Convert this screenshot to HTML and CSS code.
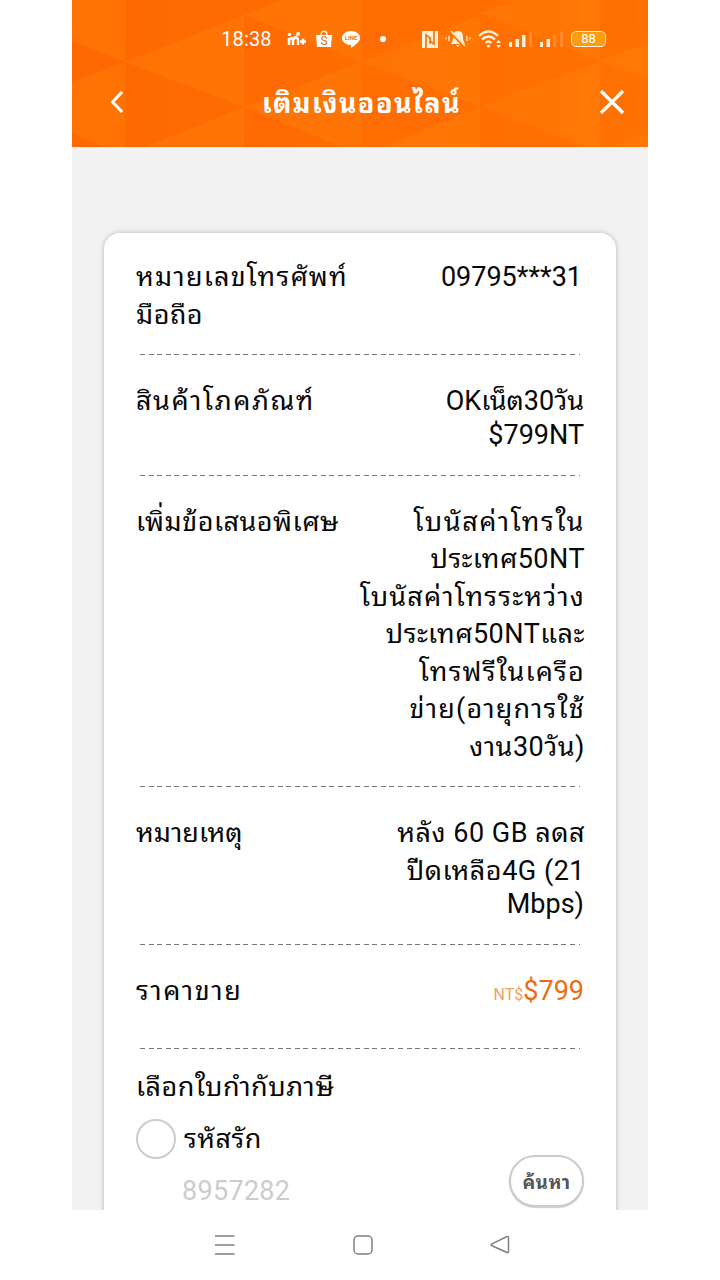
FILE: index.html
```html
<!DOCTYPE html>
<html lang="th">
<head>
    <meta charset="UTF-8">
    <meta name="viewport" content="width=device-width, initial-scale=1.0">
    <title>เติมเงินออนไลน์</title>
    <link rel="stylesheet" href="styles.css">
</head>
<body>
    <div class="phone">
        <header class="header">
            <svg class="pattern" viewBox="0 0 576 147" preserveAspectRatio="none">
                <path d="M-67 15L53 -32V62ZM-67 107L53 62V155ZM53 62L172 15V107ZM53 155L172 107V200ZM172 15L290 -32V62ZM172 107L290 62V155ZM290 62L408 15V107ZM290 155L408 107V200ZM408 13L528 -32V61ZM408 106L528 61V152ZM528 61L648 15V107ZM528 152L648 107V200Z"/>
            </svg>
            <div class="status-bar">
                <span class="time">18:38</span>
                <div class="notifications">
                    <svg width="19" height="16" viewBox="0 0 19 16">
                        <path d="M2 7v7M2 9q3-4 4 0v5M6 9q4-5 5 0v5M13 10.500h6M16 7.500v6" fill="none" stroke="#fff" stroke-width="2.500"/>
                        <circle cx="2.500" cy="3.500" r="1.700" fill="#fff"/>
                        <circle cx="11" cy="3" r="1.900" fill="#fff"/>
                        <path d="M5 7L10 5" stroke="#fff" stroke-width="1.500"/>
                    </svg>
                    <svg width="16" height="18" viewBox="0 0 16 18">
                        <path d="M0 5h16l-1 12H1z" fill="#fff"/>
                        <path d="M5 5c0-5 6-5 6 0" fill="none" stroke="#fff" stroke-width="1.300"/>
                        <text class="bag-letter" x="8" y="15" text-anchor="middle">S</text>
                    </svg>
                    <svg width="18" height="17" viewBox="0 0 18 17">
                        <path d="M9 0c5 0 9 3 9 7 0 3-3 6-9 10v-3c-5 0-9-3-9-7s4-7 9-7z" fill="#fff"/>
                        <text class="line-letter" x="9" y="9" text-anchor="middle">LINE</text>
                    </svg>
                    <span class="dot"></span>
                </div>
                <div class="indicators">
                    <svg width="16" height="17" viewBox="0 0 16 17">
                        <path d="M0 0h16v17H0z" fill="#fff0dc"/>
                        <path d="M4 17V4L8 7V13M12 0V13L8 10" fill="none" stroke="#ff7500" stroke-width="1.700"/>
                    </svg>
                    <svg width="26" height="18" viewBox="0 0 26 18">
                        <path d="M13 1c-4 0-5 3-5 6 0 4-1 5-2 7h14c-1-2-2-3-2-7 0-3-1-6-5-6zM11 15h4q-2 3-4 0" fill="#fff0dc"/>
                        <path d="M5 2l15 15" stroke="#ff7500" stroke-width="2.500"/>
                        <path d="M6 1l14 15M4 6v5M1 7.500v2M22 6v5M25 7.500v2" stroke="#fff0dc" stroke-width="1.300"/>
                    </svg>
                    <svg width="24" height="18" viewBox="0 0 24 18">
                        <path d="M1 6q9.500-9 19 0M4 9.500q6.500-6 13 0M7.500 13q3-3 6 0" fill="none" stroke="#fff0dc" stroke-width="2.400"/>
                        <circle cx="10.500" cy="16" r="1.600" fill="#fff0dc"/>
                        <path d="M18 13l2.500-3 2.500 3zM18 15l2.500 3 2.500-3z" fill="#fff0dc"/>
                    </svg>
                    <svg width="24" height="16" viewBox="0 0 24 16">
                        <path d="M0 11h3v5H0zM6.500 8h3.500v8H6.500zM13 4h3.500v12H13z" fill="#fff0dc"/>
                        <path d="M20 1h3v15h-3z" fill="#ff8a30"/>
                    </svg>
                    <svg width="24" height="16" viewBox="0 0 24 16">
                        <path d="M0 11h3v5H0zM6.500 8h3.500v8H6.500z" fill="#fff0dc"/>
                        <path d="M13 4h3v12h-3zM20 1h3v15h-3z" fill="#ff8a30"/>
                    </svg>
                    <div class="battery">88</div>
                </div>
            </div>
            <div class="title-bar">
                <svg width="14" height="24" viewBox="0 0 14 24">
                    <path d="M12 2L2.500 12L12 22" fill="none" stroke="#fff" stroke-width="3"/>
                </svg>
                <h1>เติมเงินออนไลน์</h1>
                <svg width="26" height="26" viewBox="0 0 26 26">
                    <path d="M2 2L24 24M24 2L2 24" fill="none" stroke="#fff" stroke-width="3.200"/>
                </svg>
            </div>
        </header>

        <main class="content">
            <section class="card">
                <div class="row">
                    <div class="label"><span class="wide">หมายเลขโทรศัพท์</span><span class="loose">มือถือ</span></div>
                    <div class="value number"><span>09795***31</span></div>
                </div>
                <div class="row">
                    <div class="label"><span class="wider">สินค้าโภคภัณฑ์</span></div>
                    <div class="value"><span>OKเน็ต30วัน</span><span class="latin">$799NT</span></div>
                </div>
                <div class="row">
                    <div class="label"><span class="loose">เพิ่มข้อเสนอพิเศษ</span></div>
                    <div class="value">
                        <span class="wider">โบนัสค่าโทรใน</span>
                        <span class="loose">ประเทศ50NT</span>
                        <span class="wide">โบนัสค่าโทรระหว่าง</span>
                        <span class="loose">ประเทศ50NTและ</span>
                        <span class="wide">โทรฟรีในเครือ</span>
                        <span class="wide">ข่าย(อายุการใช้</span>
                        <span class="loose">งาน30วัน)</span>
                    </div>
                </div>
                <div class="row">
                    <div class="label"><span>หมายเหตุ</span></div>
                    <div class="value">
                        <span class="loose">หลัง 60 GB ลดส</span>
                        <span class="loose">ปีดเหลือ4G (21</span>
                        <span class="latin">Mbps)</span>
                    </div>
                </div>
                <div class="row row-price">
                    <div class="label"><span class="wider">ราคาขาย</span></div>
                    <div class="value price"><span><small>NT$</small>$799</span></div>
                </div>
                <div class="invoice">
                    <div class="label"><span class="loose">เลือกใบกำกับภาษี</span></div>
                    <div class="option">
                        <i class="radio"></i>
                        <div class="label"><span class="loose">รหัสรัก</span></div>
                    </div>
                    <div class="search">
                        <span class="placeholder">8957282</span>
                        <button class="btn-search">ค้นหา</button>
                    </div>
                </div>
            </section>
        </main>

        <nav class="nav-bar">
            <svg width="20" height="20" viewBox="0 0 20 20">
                <path d="M0 1h19.500M0 10h19.500M0 19h19.500" stroke="#808080" stroke-width="1.500"/>
            </svg>
            <svg width="20" height="20" viewBox="0 0 20 20">
                <rect x="1" y="1" width="18" height="18" rx="4" fill="none" stroke="#808080" stroke-width="1.500"/>
            </svg>
            <svg width="20" height="20" viewBox="0 0 20 20">
                <path d="M1.500 9.200L17 1.500Q18.500 1 18.500 2.500V16.500Q18.500 18.500 17 17.500L1.500 10.500Q.5 9.800 1.500 9.200Z" fill="none" stroke="#808080" stroke-width="1.500"/>
            </svg>
        </nav>
    </div>
</body>
</html>
```

FILE: styles.css
```css
* {
    box-sizing: border-box;
}

body {
    margin: 0;
    background: #fff;
    color: #080808;
    font-family: Roboto, "Noto Sans Thai Looped", "Noto Looped Thai", Waree, Loma, Garuda, "Noto Serif Thai", sans-serif;
}

svg {
    display: block;
    flex: none;
}

.phone {
    width: 576px;
    height: 1280px;
    margin: 0 auto;
    display: flex;
    flex-direction: column;
    overflow: hidden;
}

/* Header */
.header {
    position: relative;
    flex: none;
    height: 147px;
    padding-top: 24px;
    background: linear-gradient(to right, #ff6802, #ff7103);
}

.pattern {
    position: absolute;
    top: 0;
    left: 0;
    width: 576px;
    height: 147px;
    fill: #ff7d08;
    fill-opacity: 0.5;
}

.status-bar {
    position: relative;
    height: 30px;
    padding: 0 42px 0 149px;
    display: flex;
    align-items: center;
    color: #fff;
}

.time {
    width: 66px;
    font-size: 20px;
    letter-spacing: 0.2px;
}

.notifications {
    display: flex;
    align-items: center;
    gap: 10px;
}

.bag-letter {
    font-size: 12px;
    fill: #d86a1c;
}

.line-letter {
    font-size: 6px;
    font-weight: bold;
    fill: #f07818;
}

.dot {
    width: 6px;
    height: 6px;
    margin-left: 10px;
    border-radius: 50%;
    background: #fff;
}

.indicators {
    margin-left: auto;
    display: flex;
    align-items: center;
    gap: 7px;
}

.battery {
    width: 35px;
    height: 16px;
    border: 1.5px solid #fff0dc;
    border-radius: 5px;
    background: #ff9c10;
    font-size: 13px;
    line-height: 14px;
    text-align: center;
}

.title-bar {
    position: relative;
    height: 95px;
    padding: 0 23px 0 38px;
    display: flex;
    align-items: center;
    justify-content: space-between;
}

.title-bar h1 {
    margin: 0;
    padding-bottom: 2px;
    color: #fff;
    font-size: 27px;
    letter-spacing: 1.4px;
    white-space: nowrap;
}

/* Content */
.content {
    flex: none;
    height: 1063px;
    padding: 86px 32px 0;
    background: #f2f2f2;
    overflow: hidden;
}

.card {
    height: 1010px;
    padding: 25px 32px 0;
    border-radius: 16px;
    background: #fff;
    box-shadow: 0 0 5px rgba(0, 0, 0, 0.25);
}

.row {
    display: flex;
    justify-content: space-between;
    padding-bottom: 22px;
    margin-bottom: 27px;
    background: repeating-linear-gradient(to right, #777 0 5px, transparent 5px 8.6px) 4px 100% / 440px 1px no-repeat;
}

.row-price {
    padding-bottom: 39.5px;
    margin-bottom: 19px;
}

.label span,
.value span {
    display: block;
    height: 37.5px;
    font-size: 27px;
    line-height: 38.5px;
    white-space: nowrap;
}

.value {
    text-align: right;
}

.value .latin {
    height: 34px;
    line-height: 30px;
}

.label .loose,
.value .loose {
    letter-spacing: 0.5px;
}

.label .wide,
.value .wide {
    letter-spacing: 1.2px;
}

.label .wider,
.value .wider {
    letter-spacing: 1.6px;
}

.value .loose,
.value .wide,
.value .wider {
    margin-right: -1px;
}

.number {
    padding-right: 2px;
}

.price span {
    color: #ee6b10;
}

.price small {
    color: #f0a060;
    font-size: 16px;
}

.option {
    display: flex;
    align-items: center;
    gap: 8px;
    margin-top: 13px;
}

.radio {
    width: 40px;
    height: 40px;
    border: 2px solid #ccc;
    border-radius: 50%;
}

.search {
    display: flex;
    justify-content: space-between;
    padding-left: 46px;
}

.placeholder {
    margin-top: 16px;
    color: #ccc;
    font-size: 27px;
    letter-spacing: 0.3px;
}

.btn-search {
    width: 75px;
    height: 52px;
    margin-top: -4px;
    padding: 0;
    border: 2px solid #ccc;
    border-radius: 26px;
    background: #fff;
    box-shadow: 0 1px 1px #ccc;
    color: #555;
    font-family: inherit;
    font-size: 19px;
    font-weight: bold;
    letter-spacing: 0.4px;
}

/* System navigation */
.nav-bar {
    height: 70px;
    padding: 0 138px 0 143px;
    display: flex;
    align-items: center;
    justify-content: space-between;
}
```
